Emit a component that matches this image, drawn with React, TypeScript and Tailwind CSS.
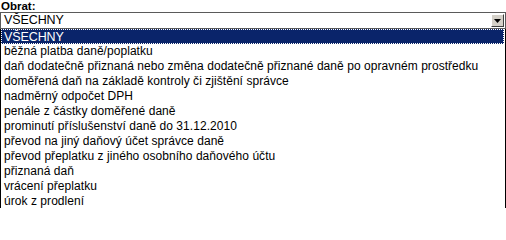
import React from "react";

const items = [
  "VŠECHNY",
  "běžná platba daně/poplatku",
  "daň dodatečně přiznaná nebo změna dodatečně přiznané daně po opravném prostředku",
  "doměřená daň na základě kontroly či zjištění správce",
  "nadměrný odpočet DPH",
  "penále z částky doměřené daně",
  "prominutí příslušenství daně do 31.12.2010",
  "převod na jiný daňový účet správce daně",
  "převod přeplatku z jiného osobního daňového účtu",
  "přiznaná daň",
  "vrácení přeplatku",
  "úrok z prodlení",
];

export default function App() {
  return (
    <div className="w-[506px] h-[208px] overflow-hidden bg-white text-black font-['Liberation_Sans',Arial,sans-serif]">
      <div className="h-[12px] text-[11.5px] leading-[12px] font-bold pl-[1px]">Obrat:</div>
      <div className="flex items-center h-[17px] w-[506px] border border-[#5a5a5a] bg-white">
        <div className="flex-1 pl-[3px] text-[12.5px] leading-[15px] tracking-[-0.1px]">VŠECHNY</div>
        <div className="flex items-center justify-center w-[13px] h-[13px] mr-[1px] bg-[#d4d0c8] border border-t-white border-l-white border-r-[#404040] border-b-[#404040]">
          <svg width="7" height="4" viewBox="0 0 7 4">
            <path d="M0 0H7L3.5 4Z" fill="#000" />
          </svg>
        </div>
      </div>
      <div className="w-[506px] border-x border-black bg-white">
        {items.map((t, i) => (
          <div
            key={i}
            className={
              i === 0
                ? "h-[15px] mr-[1px] pl-[2px] text-[12.5px] leading-[14px] tracking-[-0.1px] whitespace-nowrap bg-[#0a246a] text-white border border-dotted border-white"
                : "h-[15px] pl-[3px] text-[12px] leading-[15px] tracking-[0.05px] whitespace-nowrap"
            }
          >
            {t}
          </div>
        ))}
      </div>
    </div>
  );
}
